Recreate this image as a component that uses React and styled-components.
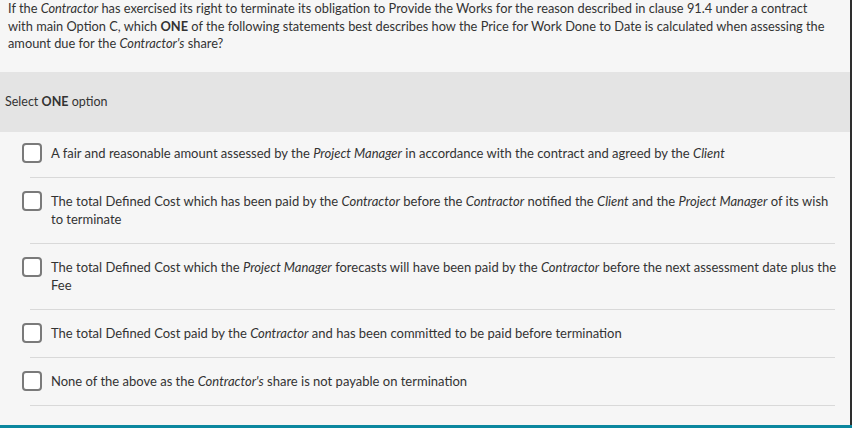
import React from "react";
import styled, { createGlobalStyle } from "styled-components";

const GlobalStyle = createGlobalStyle`
  html, body {
    margin: 0;
    padding: 0;
    background: #ffffff;
  }
  body {
    font-family: Lato, "Open Sans", sans-serif;
    color: #333333;
  }
`;

const Frame = styled.div`
  width: 852px;
`;

const Card = styled.div`
  background: #f6f6f6;
  border-right: 2px solid #2e2e2e;
  height: 425px;
  box-sizing: border-box;
`;

const Question = styled.p`
  margin: 0;
  padding: 0 20px 19px 8px;
  font-size: 12.8px;
  line-height: 17.5px;
  color: #333333;
`;

const Instruction = styled.div`
  height: 60px;
  display: flex;
  align-items: center;
  padding-left: 5px;
  background: #e4e4e4;
  font-size: 12.5px;
  color: #333333;
`;

const OptionList = styled.ul`
  list-style: none;
  margin: 0;
  padding: 0;
`;

const OptionRow = styled.li`
  display: flex;
  align-items: flex-start;
  gap: 9px;
  margin: 0 15px 0 30px;
  padding: 13px 0 14px;
  border-bottom: 1px solid #d9d9d9;

  &:first-child {
    padding-top: 11px;
  }
`;

const Box = styled.span`
  flex: 0 0 auto;
  width: 20px;
  height: 20px;
  margin-left: -8px;
  box-sizing: border-box;
  border: 2px solid #7a7a7a;
  border-radius: 4px;
  background: #ffffff;
`;

const OptionText = styled.span`
  padding: 1px 0;
  margin-right: -3px;
  font-size: 13px;
  line-height: 18px;
  color: #333333;
`;

const BottomBar = styled.div`
  height: 3px;
  background: #0b879f;
`;

const options = [
  <>A fair and reasonable amount assessed by the <i>Project Manager</i> in accordance with the contract and agreed by the <i>Client</i></>,
  <>The total Defined Cost which has been paid by the <i>Contractor</i> before the <i>Contractor</i> notified the <i>Client</i> and the <i>Project Manager</i> of its wish to terminate</>,
  <>The total Defined Cost which the <i>Project Manager</i> forecasts will have been paid by the <i>Contractor</i> before the next assessment date plus the Fee</>,
  <>The total Defined Cost paid by the <i>Contractor</i> and has been committed to be paid before termination</>,
  <>None of the above as the <i>Contractor's</i> share is not payable on termination</>,
];

export default function App() {
  return (
    <Frame>
      <GlobalStyle />
      <Card>
        <Question>
          If the <i>Contractor</i> has exercised its right to terminate its obligation to Provide the Works for the reason described in clause 91.4 under a contract with main Option C, which <b>ONE</b> of the following statements best describes how the Price for Work Done to Date is calculated when assessing the amount due for the <i>Contractor's</i> share?
        </Question>
        <Instruction>
          <span>Select <b>ONE</b> option</span>
        </Instruction>
        <OptionList>
          {options.map((text, i) => (
            <OptionRow key={i}>
              <Box />
              <OptionText>{text}</OptionText>
            </OptionRow>
          ))}
        </OptionList>
      </Card>
      <BottomBar />
    </Frame>
  );
}
